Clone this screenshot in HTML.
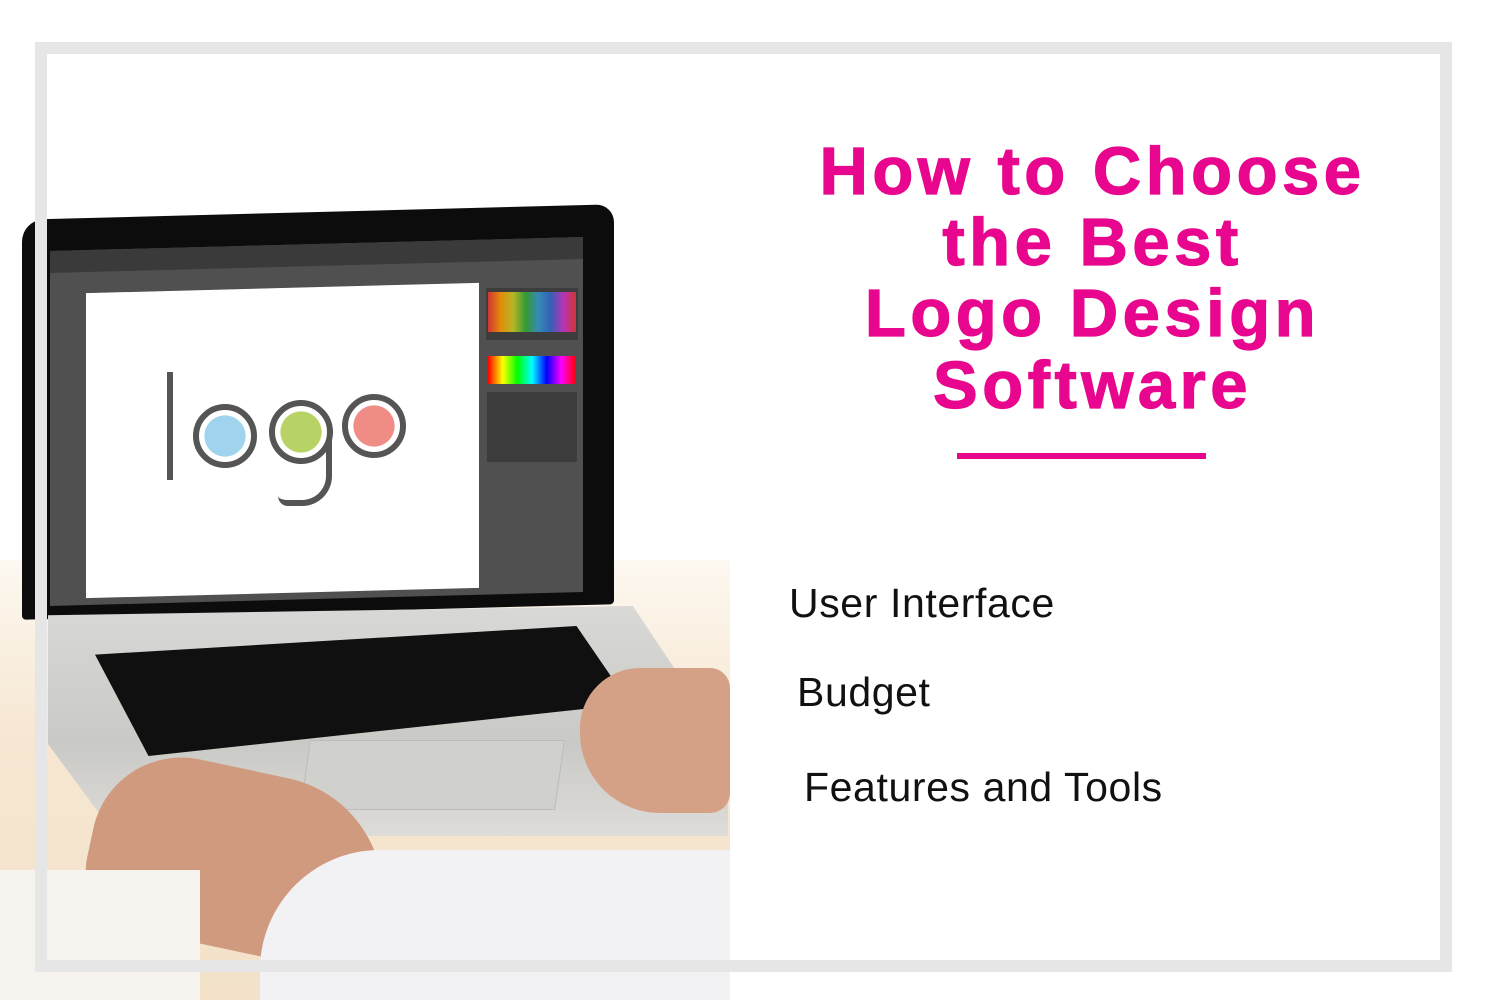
<!DOCTYPE html>
<html><head><meta charset="utf-8"><style>
*{margin:0;padding:0;box-sizing:border-box}
body{width:1500px;height:1000px;background:#fff;position:relative;overflow:hidden;font-family:"Liberation Sans",sans-serif}
.a{position:absolute}
.t{position:absolute;left:760px;width:665px;text-align:center;color:#e8068e;font-weight:bold;font-size:67px;letter-spacing:4.5px;line-height:1;white-space:nowrap;-webkit-text-stroke:1.2px #e8068e}
.l{position:absolute;color:#111;font-size:41px;letter-spacing:0.6px;white-space:nowrap;line-height:1}
</style></head><body>
<div class="a" style="left:0;top:0;width:730px;height:1000px;overflow:hidden;background:#fff">
  <div class="a" style="left:0;top:560px;width:730px;height:440px;background:linear-gradient(#fdf8f0,#f6e7d2 40%,#f3e2c9)"></div>
  <div class="a" style="left:22px;top:212px;width:592px;height:400px;background:#0c0c0c;border-radius:22px 18px 4px 4px;transform:skewY(-1.5deg)"></div>
  <div class="a" style="left:50px;top:244px;width:533px;height:355px;background:#505050;transform:skewY(-1.5deg)"></div>
  <div class="a" style="left:50px;top:244px;width:533px;height:22px;background:#3a3a3a;transform:skewY(-1.5deg)"></div>
  <div class="a" style="left:86px;top:288px;width:393px;height:305px;background:#fff;transform:skewY(-1.5deg)"></div>
  <div class="a" style="left:486px;top:288px;width:92px;height:52px;background:#3d3d3d"></div>
  <div class="a" style="left:488px;top:292px;width:88px;height:40px;background:linear-gradient(90deg,#e33,#f90,#cc2,#3a3,#39c,#36c,#c3c,#e33);opacity:.85"></div>
  <div class="a" style="left:488px;top:356px;width:88px;height:28px;background:linear-gradient(90deg,#f00,#ff0,#0f0,#0ff,#00f,#f0f,#f00)"></div>
  <div class="a" style="left:487px;top:392px;width:90px;height:70px;background:#3c3c3c"></div>
  <div class="a" style="left:167px;top:372px;width:6px;height:108px;background:#555"></div>
  <div class="a" style="left:193px;top:404px;width:64px;height:64px;border:6px solid #555;border-radius:50%;background:radial-gradient(#9fd3ee 55%,#fff 57%)"></div>
  <div class="a" style="left:269px;top:400px;width:64px;height:64px;border:6px solid #555;border-radius:50%;background:radial-gradient(#b7d366 55%,#fff 57%)"></div>
  <div class="a" style="left:278px;top:440px;width:54px;height:66px;border:6px solid #555;border-top:none;border-left:none;border-radius:0 0 30px 10px"></div>
  <div class="a" style="left:342px;top:394px;width:64px;height:64px;border:6px solid #555;border-radius:50%;background:radial-gradient(#ef8c86 55%,#fff 57%)"></div>
  <div class="a" style="left:48px;top:606px;width:680px;height:230px;background:linear-gradient(#d8d8d6,#c9c9c6 60%,#dedcd8);clip-path:polygon(0 4%,86% 0,100% 62%,100% 100%,10% 100%,0 60%)"></div>
  <div class="a" style="left:95px;top:626px;width:535px;height:130px;background:#101010;clip-path:polygon(0 22%,90% 0,100% 60%,10% 100%)"></div>
  <div class="a" style="left:305px;top:740px;width:255px;height:70px;background:#d0d0cc;border:1px solid #bbb;transform:skewX(-8deg)"></div>
  <div class="a" style="left:90px;top:770px;width:300px;height:180px;background:#cf9a7e;border-radius:90px 120px 40px 60px;transform:rotate(12deg)"></div>
  <div class="a" style="left:580px;top:668px;width:150px;height:145px;background:#d4a187;border-radius:60px 20px 20px 80px"></div>
  <div class="a" style="left:260px;top:850px;width:480px;height:200px;background:#f2f2f4;border-radius:120px 0 0 0"></div>
  <div class="a" style="left:0;top:870px;width:200px;height:130px;background:#f6f3ee"></div>
</div>
<div class="a" style="left:35px;top:42px;width:1417px;height:930px;border:12px solid #e6e6e6"></div>
<div class="t" style="top:138px">How to Choose</div>
<div class="t" style="top:209px">the Best</div>
<div class="t" style="top:280px">Logo Design</div>
<div class="t" style="top:352px">Software</div>
<div class="a" style="left:957px;top:453px;width:249px;height:6px;background:#e8068e"></div>
<div class="l" style="left:789px;top:583px">User Interface</div>
<div class="l" style="left:797px;top:672px">Budget</div>
<div class="l" style="left:804px;top:767px">Features and Tools</div>
</body></html>
